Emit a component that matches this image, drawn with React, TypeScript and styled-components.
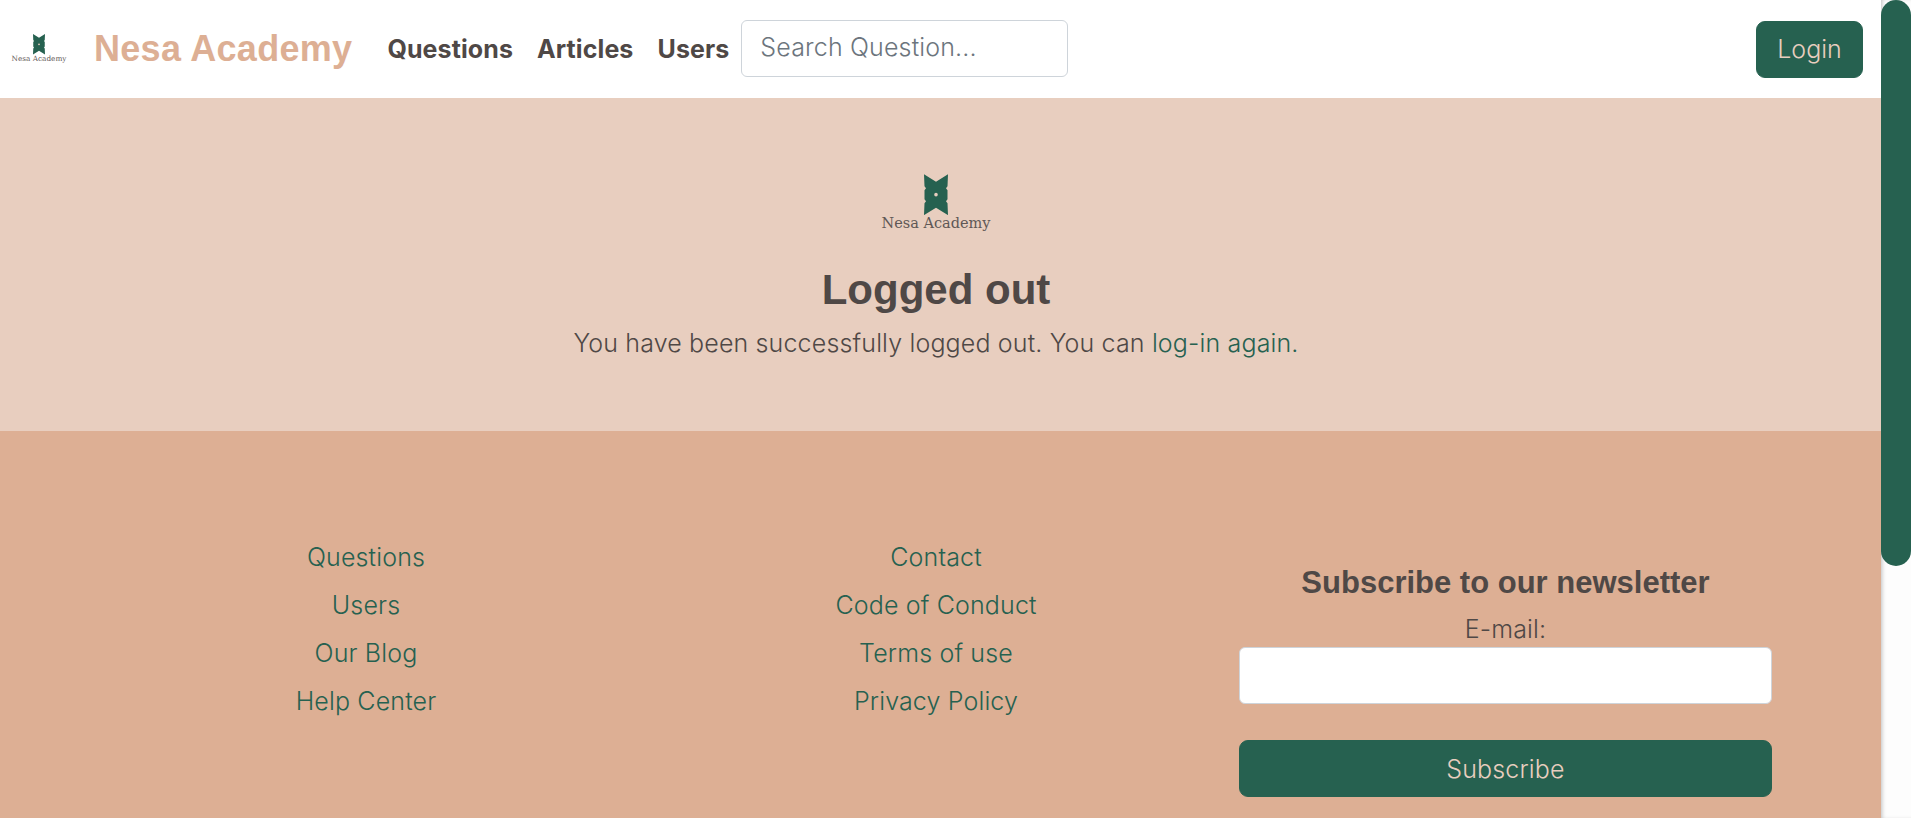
import React from 'react'
import styled, { createGlobalStyle } from 'styled-components'

const GlobalStyle = createGlobalStyle`
  body {
    margin: 0;
    background: #fff;
    color: #4f4846;
    font-family: 'Inter', 'Noto Sans', sans-serif;
    font-size: 25px;
    font-weight: 300;
    letter-spacing: 0.15px;
    line-height: 36px;
  }
  * {
    box-sizing: border-box;
  }
  a {
    text-decoration: none;
  }
`

const Shell = styled.div`
  display: flex;
  height: 100vh;
  overflow: hidden;
`

const Page = styled.main`
  flex: 1;
  min-width: 0;
`

const ScrollTrack = styled.div`
  width: 30px;
  background: #fdfdfd;
  box-shadow: inset 3px 0 4px -2px rgba(0, 0, 0, 0.25);
`

const ScrollThumb = styled.div`
  height: 566px;
  background: #266150;
  border-radius: 15px;
`

const Navbar = styled.nav`
  display: flex;
  align-items: center;
  height: 98px;
  padding: 0 18px 0 12px;
  background: #fff;
`

const BrandName = styled.a`
  margin-left: 28px;
  font-family: 'Liberation Sans', sans-serif;
  font-size: 36px;
  font-weight: 700;
  letter-spacing: 0.3px;
  color: #ddaf94;
  white-space: nowrap;
`

const NavLinks = styled.div`
  display: flex;
  gap: 24px;
  margin-left: 35px;
`

const NavLink = styled.a`
  font-weight: 700;
  letter-spacing: 0.1px;
  color: #4f4846;
`

const SearchInput = styled.input`
  width: 327px;
  height: 57px;
  margin: 0 0 2px 12px;
  padding: 7px 18px 10px;
  border: 1px solid #ced4da;
  border-radius: 6px;
  font: 300 25px 'Inter', sans-serif;
  letter-spacing: 0.15px;
  color: #4f4846;
  &::placeholder {
    color: #6c757d;
  }
`

const LoginButton = styled.button`
  width: 107px;
  height: 57px;
  margin-left: auto;
  padding: 0;
  background: #266150;
  border: 1px solid #266150;
  border-radius: 9px;
  font: 300 25px 'Inter', sans-serif;
  color: #e8cebf;
`

const Hero = styled.section`
  height: 333px;
  padding: 76px 9px 0 0;
  background: #e8cebf;
  text-align: center;
`

const HeroTitle = styled.h1`
  margin: 33px 0 0;
  font-family: 'Liberation Sans', sans-serif;
  font-size: 42px;
  font-weight: 700;
  letter-spacing: 0;
  line-height: 50px;
  color: #4f4846;
`

const HeroText = styled.p`
  margin: 10px 0 0;
`

const InlineLink = styled.a`
  color: #266150;
`

const Footer = styled.footer`
  height: 400px;
  padding-top: 108px;
  background: #ddaf94;
`

const FooterGrid = styled.div`
  display: grid;
  grid-template-columns: repeat(3, 570px);
  width: 1710px;
  margin-left: 81px;
`

const FooterColumn = styled.ul`
  display: flex;
  flex-direction: column;
  gap: 12px;
  margin: 0;
  padding: 0;
  list-style: none;
  text-align: center;
`

const FooterLink = styled.a`
  color: #266150;
`

const Newsletter = styled.form`
  display: flex;
  flex-direction: column;
  padding: 27px 19px 0 18px;
  text-align: center;
`

const NewsletterTitle = styled.h4`
  margin: 0;
  font-family: 'Liberation Sans', sans-serif;
  font-size: 31px;
  font-weight: 700;
  letter-spacing: 0;
  line-height: 34px;
  color: #4f4846;
`

const EmailLabel = styled.label`
  margin-top: 11px;
`

const EmailInput = styled.input`
  height: 57px;
  background: #fff;
  border: 1px solid #ced4da;
  border-radius: 6px;
`

const SubscribeButton = styled.button`
  height: 57px;
  margin-top: 36px;
  background: #266150;
  border: 1px solid #266150;
  border-radius: 9px;
  font: 300 25px 'Inter', sans-serif;
  letter-spacing: 0.15px;
  color: #e8cebf;
`

const LogoWrap = styled.span<{ $width: number }>`
  display: inline-flex;
  flex-direction: column;
  align-items: center;
  width: ${p => p.$width}px;
  vertical-align: top;
`

const LogoText = styled.span<{ $size: number }>`
  font-family: 'DejaVu Serif', 'Liberation Serif', serif;
  font-size: ${p => p.$size}px;
  line-height: 1.15;
  font-weight: 400;
  letter-spacing: 0;
  color: #5f5856;
  white-space: nowrap;
`

const Emblem = ({ size }: { size: number }) => (
  <svg width={size} height={size * 1.72} viewBox="0 0 24 41" aria-hidden="true">
    <path
      fill="#266150"
      d="M0 0 L12 7.5 L24 0 L23.5 12 L22 14 L23.5 16 L23.5 25 L22 27 L23.5 29 L24 41 L12 33.5 L0 41 L.5 29 L2 27 L.5 25 L.5 16 L2 14 L.5 12 Z"
    />
    <circle cx="12" cy="20.5" r="1.8" fill="#e8cebf" />
  </svg>
)

const Logo = ({ size, textSize, width }: { size: number; textSize: number; width: number }) => (
  <LogoWrap $width={width}>
    <Emblem size={size} />
    <LogoText $size={textSize}>Nesa Academy</LogoText>
  </LogoWrap>
)

export default function App() {
  return (
    <Shell>
      <GlobalStyle />
      <Page>
        <Navbar>
          <Logo size={12} textSize={7.3} width={54} />
          <BrandName href="#">Nesa Academy</BrandName>
          <NavLinks>
            <NavLink href="#">Questions</NavLink>
            <NavLink href="#">Articles</NavLink>
            <NavLink href="#">Users</NavLink>
          </NavLinks>
          <SearchInput placeholder="Search Question..." />
          <LoginButton>Login</LoginButton>
        </Navbar>
        <Hero>
          <Logo size={24} textSize={14.5} width={110} />
          <HeroTitle>Logged out</HeroTitle>
          <HeroText>
            You have been successfully logged out. You can <InlineLink href="#">log-in again.</InlineLink>
          </HeroText>
        </Hero>
        <Footer>
          <FooterGrid>
            <FooterColumn>
              {['Questions', 'Users', 'Our Blog', 'Help Center'].map(label => (
                <li key={label}>
                  <FooterLink href="#">{label}</FooterLink>
                </li>
              ))}
            </FooterColumn>
            <FooterColumn>
              {['Contact', 'Code of Conduct', 'Terms of use', 'Privacy Policy'].map(label => (
                <li key={label}>
                  <FooterLink href="#">{label}</FooterLink>
                </li>
              ))}
            </FooterColumn>
            <Newsletter onSubmit={e => e.preventDefault()}>
              <NewsletterTitle>Subscribe to our newsletter</NewsletterTitle>
              <EmailLabel>E-mail:</EmailLabel>
              <EmailInput type="email" />
              <SubscribeButton>Subscribe</SubscribeButton>
            </Newsletter>
          </FooterGrid>
        </Footer>
      </Page>
      <ScrollTrack>
        <ScrollThumb />
      </ScrollTrack>
    </Shell>
  )
}
